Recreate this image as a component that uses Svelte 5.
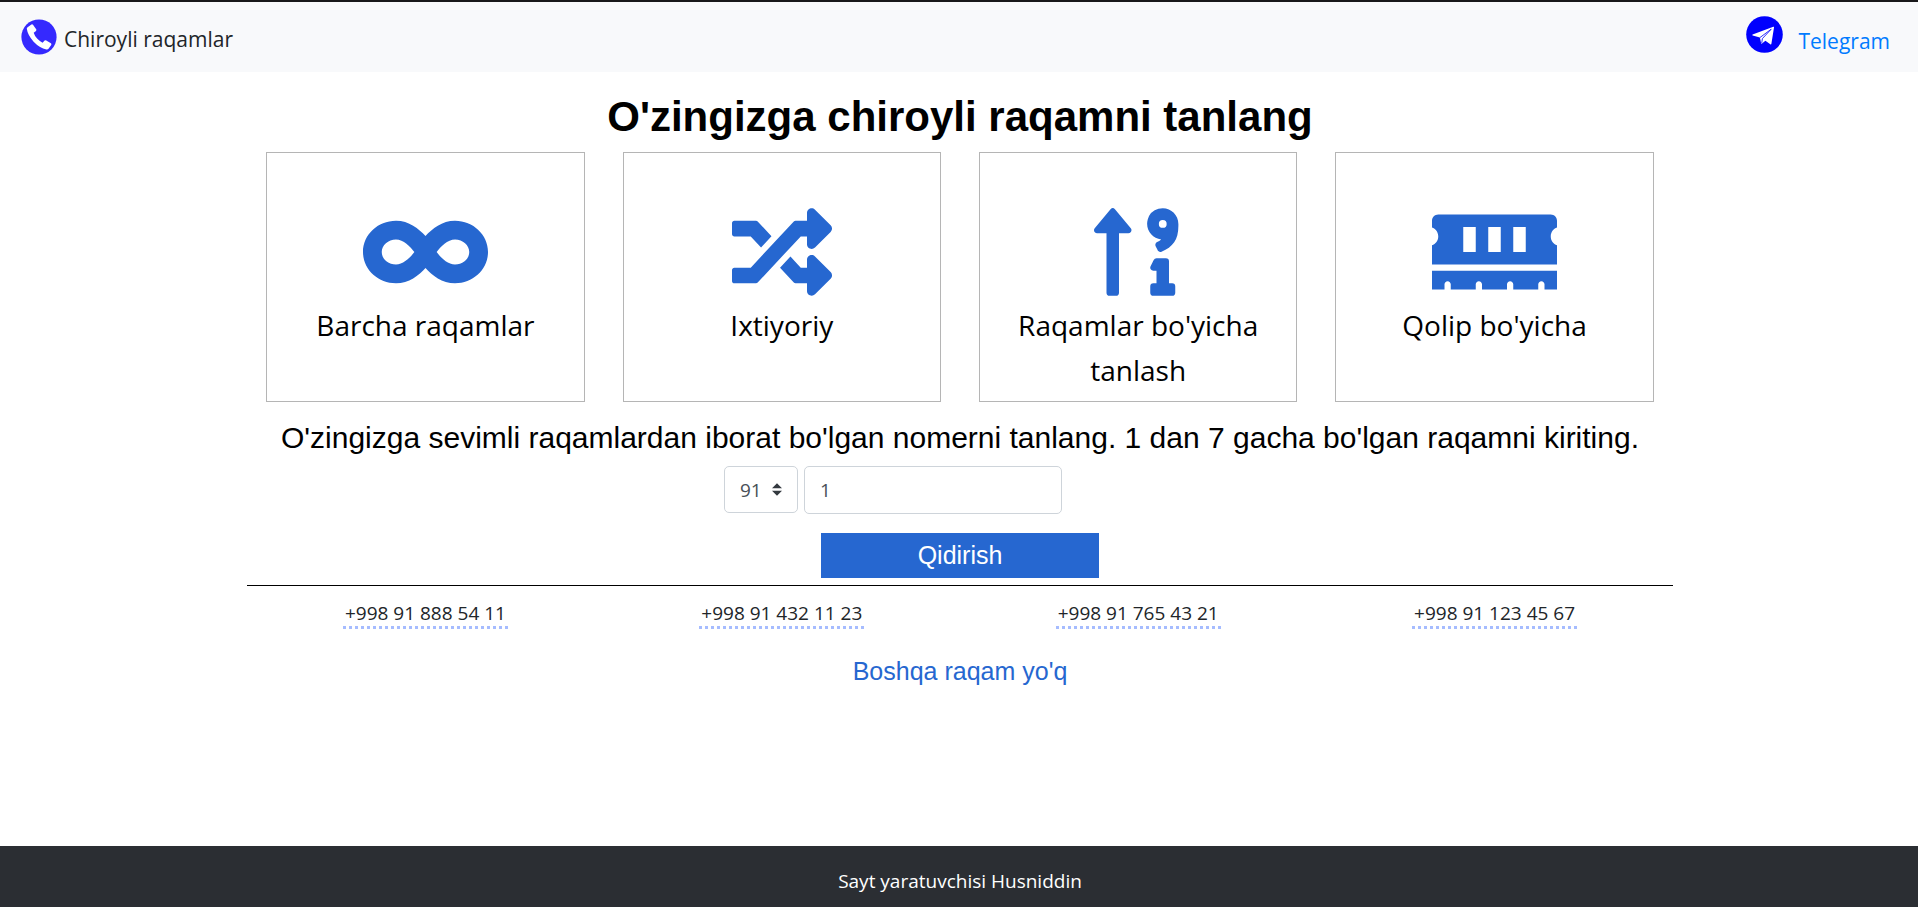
<script>
  const cards = [
    {
      label: 'Barcha raqamlar',
      width: 640,
      path: 'M471.1 96C405 96 353.3 137.3 320 174.6 286.7 137.3 235 96 168.9 96 75.8 96 0 167.8 0 256s75.8 160 168.9 160c66.1 0 117.8-41.3 151.1-78.6 33.3 37.3 85 78.6 151.1 78.6 93.1 0 168.9-71.8 168.9-160S564.2 96 471.1 96zM168.9 320c-40.2 0-72.9-28.7-72.9-64s32.7-64 72.9-64c38.2 0 73.4 36.1 94 64-20.4 27.6-55.9 64-94 64zm302.2 0c-38.2 0-73.4-36.1-94-64 20.4-27.6 55.9-64 94-64 40.2 0 72.9 28.7 72.9 64s-32.7 64-72.9 64z'
    },
    {
      label: 'Ixtiyoriy',
      width: 512,
      path: 'M504.971 359.029c9.373 9.373 9.373 24.569 0 33.941l-80 79.984c-15.01 15.01-40.971 4.49-40.971-16.971V416h-58.785a12.004 12.004 0 0 1-8.773-3.812l-70.556-75.596 53.333-57.143L352 336h32v-39.981c0-21.438 25.943-31.998 40.971-16.971l80 79.981zM12 176h84l52.781 56.551 53.333-57.143-70.556-75.596A11.999 11.999 0 0 0 122.785 96H12c-6.627 0-12 5.373-12 12v56c0 6.627 5.373 12 12 12zm372 0v39.984c0 21.46 25.961 31.98 40.971 16.971l80-79.984c9.373-9.373 9.373-24.569 0-33.941l-80-79.981C409.943 24.021 384 34.582 384 56.019V96h-58.785a12.004 12.004 0 0 0-8.773 3.812L96 336H12c-6.627 0-12 5.373-12 12v56c0 6.627 5.373 12 12 12h110.785c3.326 0 6.503-1.381 8.773-3.812L352 176h32z'
    },
    {
      label: "Raqamlar bo'yicha tanlash",
      width: 448,
      path: 'M107.31 36.69a16 16 0 0 0-22.62 0l-80 96C-5.35 142.74 1.77 160 16 160h48v304a16 16 0 0 0 16 16h32a16 16 0 0 0 16-16V160h48c14.21 0 21.38-17.24 11.31-27.31zM400 416h-16V304a16 16 0 0 0-16-16h-48a16 16 0 0 0-14.29 8.83l-16 32A16 16 0 0 0 304 352h16v64h-16a16 16 0 0 0-16 16v32a16 16 0 0 0 16 16h96a16 16 0 0 0 16-16v-32a16 16 0 0 0-16-16zM330.17 34.91a79 79 0 0 0-55 54.17c-14.27 51.05 21.19 97.77 68.83 102.53a84.07 84.07 0 0 1-20.85 12.91c-7.57 3.4-10.8 12.47-8.18 20.34l9.9 20c2.87 8.63 12.53 13.49 20.9 9.91 58-24.76 86.25-61.66 86.25-132V112c-.02-51.21-48.4-91.34-101.85-77.09zM352 132a20 20 0 1 1 20-20 20 20 0 0 1-20 20z'
    },
    {
      label: "Qolip bo'yicha",
      width: 640,
      path: 'M640 130.94V96c0-17.67-14.33-32-32-32H32C14.33 64 0 78.33 0 96v34.94c18.6 6.61 32 24.19 32 45.06s-13.4 38.45-32 45.06V320h640v-98.94c-18.6-6.61-32-24.19-32-45.06s13.4-38.45 32-45.06zM224 256h-64V128h64v128zm128 0h-64V128h64v128zm128 0h-64V128h64v128zM0 448h64v-26.67c0-8.84 7.16-16 16-16s16 7.16 16 16V448h128v-26.67c0-8.84 7.16-16 16-16s16 7.16 16 16V448h128v-26.67c0-8.84 7.16-16 16-16s16 7.16 16 16V448h128v-26.67c0-8.84 7.16-16 16-16s16 7.16 16 16V448h64v-96H0v96z'
    }
  ];

  const numbers = ['+998 91 888 54 11', '+998 91 432 11 23', '+998 91 765 43 21', '+998 91 123 45 67'];

  let code = $state('91');
  let digits = $state('1');
</script>

<div class="page">
  <header>
    <a class="brand" href="#top">
      <svg viewBox="0 0 36 36" width="36" height="36" aria-hidden="true">
        <circle cx="18" cy="18" r="17.6" fill="#3529fe" />
        <path fill="#fff" d="M6.6 8.2 10.4 5.4Q11.3 4.8 12 5.7L15.2 10.3Q15.8 11.2 15 11.9L12.7 13.7Q13.5 16.6 16.1 19.5 18.8 22.4 21.6 23.7L23.6 21.6Q24.4 20.9 25.3 21.5L29.9 24.3Q30.8 25 30.2 25.9L27.5 29.7Q26.8 30.6 25.5 30.4 18.6 29 12.6 22.7 6.7 16.2 5.8 9.8 5.7 8.8 6.6 8.2Z" />
      </svg>
      <span>Chiroyli raqamlar</span>
    </a>
    <a class="telegram" href="#telegram">
      <svg viewBox="0 0 37 37" width="37" height="37" aria-hidden="true">
        <circle cx="18.5" cy="18.5" r="18.3" fill="#0000fe" />
        <path fill="#fff" d="M6.6 18.6 27.3 10.7Q28.2 10.4 28 11.4L25.4 27.8Q25.2 28.9 24.3 28.3L19.4 24.8 16 27.6Q15.3 28 15.1 27.2L13.9 21.6 6.7 19.6Q5.8 19.1 6.6 18.6Z" />
        <path fill="none" stroke="#0000fe" stroke-width="0.8" d="M14 21.5 25.2 13.2 16.4 22.6 15.7 27.2" />
      </svg>
      <span>Telegram</span>
    </a>
  </header>

  <main id="top">
    <div class="container">
      <h1>O'zingizga chiroyli raqamni tanlang</h1>

      <div class="cards">
        {#each cards as card}
          <button type="button" class="card">
            <svg viewBox="0 0 {card.width} 512" height="100" aria-hidden="true"><path d={card.path} /></svg>
            <span>{card.label}</span>
          </button>
        {/each}
      </div>

      <p class="hint">O'zingizga sevimli raqamlardan iborat bo'lgan nomerni tanlang. 1 dan 7 gacha bo'lgan raqamni kiriting.</p>

      <form onsubmit={(e) => e.preventDefault()}>
        <div class="fields">
          <span class="select">
            <select aria-label="Kod" bind:value={code}>
              <option>90</option>
              <option>91</option>
              <option>93</option>
              <option>94</option>
            </select>
            <svg viewBox="0 0 4 5" width="10" height="13" aria-hidden="true"><path fill="#343a40" d="M2 0 0 2h4zm0 5L0 3h4z" /></svg>
          </span>
          <input type="text" aria-label="Raqam" bind:value={digits} />
        </div>
        <button type="submit" class="search">Qidirish</button>
      </form>

      <ul>
        {#each numbers as number}
          <li><a href="tel:{number.replaceAll(' ', '')}">{number}</a></li>
        {/each}
      </ul>

      <p class="end">Boshqa raqam yo'q</p>
    </div>
  </main>

  <footer>Sayt yaratuvchisi Husniddin</footer>
</div>

<style>
  :global(body) {
    margin: 0;
    background: #fff;
  }

  .page {
    min-height: 100vh;
    display: flex;
    flex-direction: column;
    font-family: 'Segoe UI', 'Open Sans', 'Noto Sans', sans-serif;
    color: #212529;
  }

  .page * {
    box-sizing: border-box;
  }

  header {
    display: flex;
    justify-content: space-between;
    align-items: flex-start;
    height: 72px;
    padding: 14px 28px 0 21px;
    border-top: 2px solid #18181a;
    background: #f8f9fb;
    font-size: 21px;
    line-height: 32px;
  }

  header a {
    display: flex;
    text-decoration: none;
  }

  .brand {
    gap: 7px;
    padding-top: 3px;
    color: #212529;
  }

  .brand span {
    padding-top: 4px;
  }

  .telegram {
    gap: 15px;
    color: #007bff;
  }

  .telegram span {
    padding-top: 9px;
  }

  main {
    flex: 1;
    padding-left: 2px;
  }

  .container {
    width: 74.4%;
    margin: 0 auto;
    text-align: center;
  }

  h1 {
    margin: 0;
    padding-top: 20px;
    font: bold 42px/50px 'Liberation Sans', Arial, sans-serif;
    color: #000;
  }

  .cards {
    display: grid;
    grid-template-columns: repeat(4, 1fr);
    gap: 38px;
    padding: 10px 19px 0;
  }

  .card {
    display: flex;
    flex-direction: column;
    align-items: center;
    height: 250px;
    padding: 49px 24px 0;
    border: 1px solid #b5b5b5;
    background: #fff;
    font: 28px/45px 'Segoe UI', 'Open Sans', 'Noto Sans', sans-serif;
    color: #000;
    cursor: pointer;
  }

  .card svg {
    flex: none;
    margin-bottom: 1px;
    fill: #2667d0;
  }

  .hint {
    margin: 0;
    padding-top: 13px;
    font: 30px/45px 'Liberation Sans', Arial, sans-serif;
    color: #000;
  }

  form {
    display: flex;
    flex-direction: column;
    align-items: center;
    padding: 6px 0 7px;
    border-bottom: 1px solid #000;
  }

  .fields {
    display: flex;
    align-items: flex-start;
    gap: 6px;
    width: 472px;
    margin-bottom: 19px;
  }

  .select {
    display: grid;
    align-items: center;
  }

  .select > * {
    grid-area: 1 / 1;
  }

  .select svg {
    justify-self: end;
    margin-right: 16px;
    pointer-events: none;
  }

  select,
  input {
    height: 48px;
    margin: 0;
    padding: 0 15px;
    border: 1px solid #ced4da;
    border-radius: 5px;
    background: #fff;
    font: 19px/28px 'Segoe UI', 'Open Sans', 'Noto Sans', sans-serif;
    color: #495057;
  }

  select {
    width: 74px;
    height: 47px;
    appearance: none;
  }

  input {
    width: 258px;
  }

  .search {
    width: 278px;
    height: 45px;
    padding: 0;
    border: 0;
    background: #2667d0;
    font: 25px/45px 'Liberation Sans', Arial, sans-serif;
    color: #fff;
    cursor: pointer;
  }

  ul {
    display: grid;
    grid-template-columns: repeat(4, 1fr);
    margin: 0;
    padding: 15px 0 0;
    list-style: none;
  }

  li {
    display: flex;
    justify-content: center;
  }

  li a {
    padding: 0 2px 3px;
    background: repeating-linear-gradient(to right, #a6bcff 0 3px, transparent 3px 6px) bottom / 100% 3px no-repeat;
    font-size: 19px;
    line-height: 25px;
    color: #212529;
    text-decoration: none;
  }

  .end {
    margin: 0;
    padding: 23px 0;
    font: 25px/38px 'Liberation Sans', Arial, sans-serif;
    color: #2667d0;
  }

  footer {
    height: 61px;
    padding: 20px 0 0 2px;
    background: #2b2e33;
    font-size: 19px;
    line-height: 30px;
    text-align: center;
    color: #fff;
  }
</style>
